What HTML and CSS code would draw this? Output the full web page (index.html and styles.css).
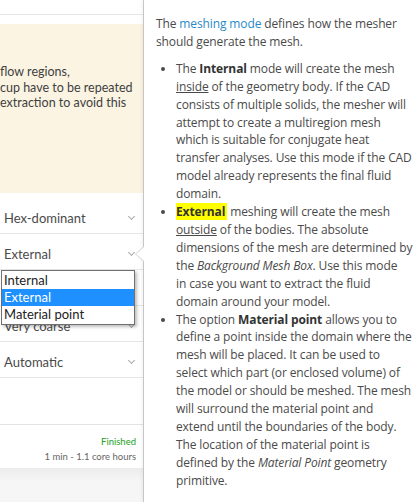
FILE: index.html
```html
<!DOCTYPE html>
<html>
<head>
<meta charset="utf-8">
<link rel="stylesheet" href="styles.css">
</head>
<body>
<div class="app">
  <aside class="left">
    <div class="topbar"></div>
    <div class="notice">
      <p>flow regions,</p>
      <p>cup have to be repeated</p>
      <p>extraction to avoid this</p>
    </div>
    <div class="rows">
      <div class="row"><span>Hex-dominant</span><i class="chev"></i></div>
      <div class="row"><span>External</span><i class="chev"></i></div>
      <div class="row"><span></span><i class="chev"></i></div>
      <div class="row"><span>Very coarse</span><i class="chev"></i></div>
      <div class="row"><span>Automatic</span><i class="chev"></i></div>
    </div>
    <div class="spacer"></div>
    <div class="status">
      <div class="finished">Finished</div>
      <div class="time">1 min - 1.1 core hours</div>
    </div>
    <div class="footer"></div>
    <ul class="dropdown">
      <li>Internal</li>
      <li class="sel">External</li>
      <li>Material point</li>
    </ul>
  </aside>
  <section class="help">
    <span class="arrow"></span>
    <p>The <a href="#">meshing mode</a> defines how the mesher<br>should generate the mesh.</p>
    <ul>
      <li>The <b>Internal</b> mode will create the mesh<br><u>inside</u> of the geometry body. If the CAD<br>consists of multiple solids, the mesher will<br>attempt to create a multiregion mesh<br>which is suitable for conjugate heat<br>transfer analyses. Use this mode if the CAD<br>model already represents the final fluid<br>domain.</li>
      <li><b class="hl">External</b> meshing will create the mesh<br><u>outside</u> of the bodies. The absolute<br>dimensions of the mesh are determined by<br>the <i>Background Mesh Box</i>. Use this mode<br>in case you want to extract the fluid<br>domain around your model.</li>
      <li>The option <b>Material point</b> allows you to<br>define a point inside the domain where the<br>mesh will be placed. It can be used to<br>select which part (or enclosed volume) of<br>the model or should be meshed. The mesh<br>will surround the material point and<br>extend until the boundaries of the body.<br>The location of the material point is<br>defined by the <i>Material Point</i> geometry<br>primitive.</li>
    </ul>
  </section>
</div>
</body>
</html>
```

FILE: styles.css
```css
* { box-sizing: border-box; }
html, body { margin: 0; padding: 0; }
body { width: 415px; height: 502px; overflow: hidden; background: #fff; }
.app { display: flex; height: 502px; }

.left {
  position: relative;
  width: 144px;
  flex: none;
  border-right: 1px solid #cfcfcf;
  display: flex;
  flex-direction: column;
  font-family: Lato, "Liberation Sans", sans-serif;
  color: #444;
}
.topbar { height: 15px; border-bottom: 1px solid #e6e6e6; flex: none; }
.notice {
  margin-top: 9px;
  height: 169px;
  background: #fbf4e3;
  padding-top: 40px;
  flex: none;
}
.notice p { margin: 0; font-size: 12.5px; line-height: 15.5px; color: #3f3f3f; white-space: nowrap; }

.rows { margin-top: 5px; flex: none; }
.row {
  height: 36px;
  border-bottom: 1px solid #e6e6e6;
  display: flex;
  align-items: center;
  justify-content: space-between;
  padding: 4px 9px 0 4px;
  font-size: 13px;
  color: #4a4a4a;
}
.chev {
  width: 5px; height: 5px;
  border-right: 1px solid #aaa;
  border-bottom: 1px solid #aaa;
  transform: rotate(45deg);
  margin-top: -3px;
}
.spacer { height: 47px; border-bottom: 1px solid #e3e3e3; flex: none; }
.status {
  height: 43px;
  padding: 10px 7px 0 0;
  text-align: right;
  flex: none;
}
.finished { font-size: 9.5px; color: #22a022; line-height: 14px; }
.time { font-size: 9.5px; color: #666; line-height: 16px; }
.footer { flex: 1; background: linear-gradient(#ececec, #f6f6f6 40%); }

.dropdown {
  position: absolute;
  left: 1px; top: 270px;
  width: 134px;
  margin: 0; padding: 1px 0;
  list-style: none;
  background: #fff;
  border: 1px solid #707070;
  box-shadow: 2px 2px 3px rgba(0,0,0,0.25);
  font-family: Lato, "Liberation Sans", sans-serif;
  font-size: 13px;
  color: #222;
  z-index: 5;
}
.dropdown li { height: 17px; line-height: 17px; padding-left: 2px; }
.dropdown li.sel { background: #1e90ff; color: #fff; }

.help {
  position: relative;
  flex: 1;
  min-width: 0;
  padding: 15px 0 0 12px;
  font-family: "Open Sans", sans-serif;
  font-size: 12px;
  letter-spacing: -0.12px;
  line-height: 17.9px;
  color: #4a4a4a;
  white-space: nowrap;
  box-shadow: -2px 0 4px rgba(0,0,0,0.06);
}
.help p { margin: 0 0 9px; }
.help a { color: #2b8ac6; text-decoration: none; }
.help ul { margin: 0; padding-left: 20px; }
.help b { color: #333; }
.help .hl { background: #ffff00; padding-right: 2px; }
.arrow {
  position: absolute;
  left: -9px; top: 246px;
  width: 0; height: 0;
  border-top: 8.5px solid transparent;
  border-bottom: 8.5px solid transparent;
  border-right: 9px solid #cfcfcf;
}
.arrow::after {
  content: "";
  position: absolute;
  left: 1px; top: -7.5px;
  border-top: 7.5px solid transparent;
  border-bottom: 7.5px solid transparent;
  border-right: 8px solid #fff;
}
```
